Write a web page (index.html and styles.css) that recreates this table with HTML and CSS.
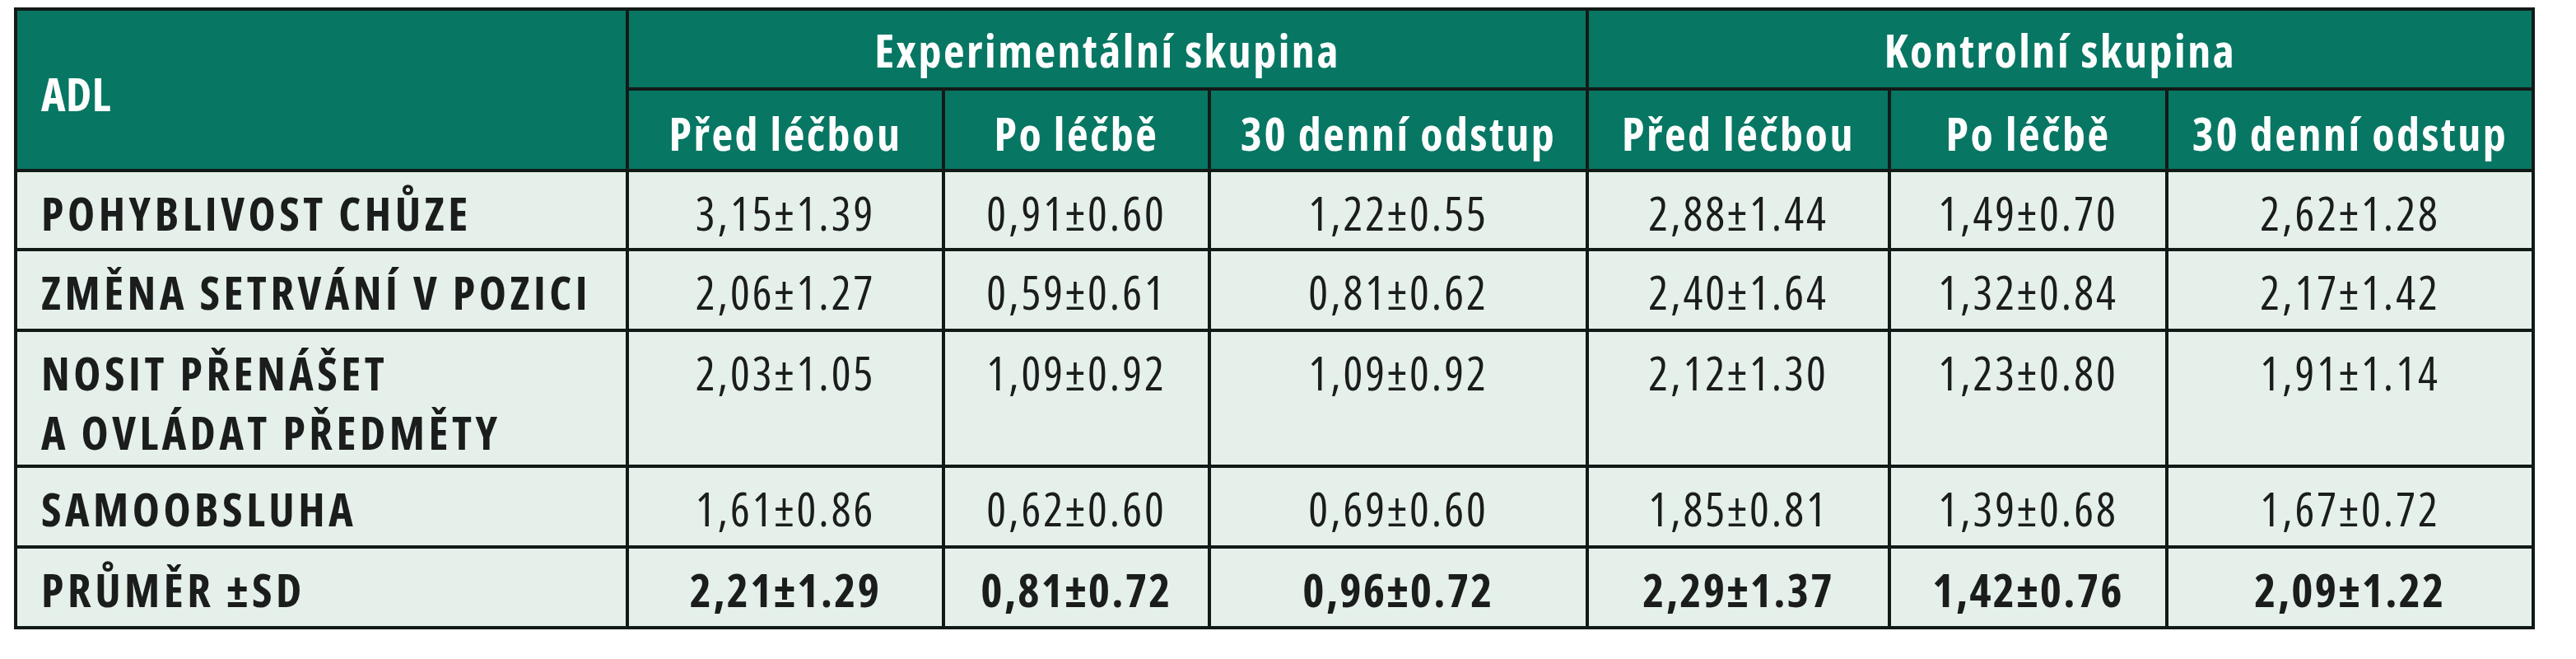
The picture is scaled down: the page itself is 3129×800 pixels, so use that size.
FILE: index.html
```html
<!DOCTYPE html>
<html lang="cs">
<head>
<meta charset="utf-8">
<title>ADL</title>
<link rel="stylesheet" href="styles.css">
</head>
<body>
<table class="adl-table">
  <colgroup>
    <col class="c-label">
    <col class="c-pre">
    <col class="c-post">
    <col class="c-30">
    <col class="c-kpre">
    <col class="c-kpost">
    <col class="c-k30">
  </colgroup>
  <thead>
    <tr class="h-group">
      <th rowspan="2" class="h-adl">ADL</th>
      <th colspan="3">Experimentální skupina</th>
      <th colspan="3">Kontrolní skupina</th>
    </tr>
    <tr class="h-sub">
      <th>Před léčbou</th>
      <th>Po léčbě</th>
      <th>30 denní odstup</th>
      <th>Před léčbou</th>
      <th>Po léčbě</th>
      <th>30 denní odstup</th>
    </tr>
  </thead>
  <tbody>
    <tr class="r-single">
      <td class="label">POHYBLIVOST CHŮZE</td>
      <td>3,15±1.39</td><td>0,91±0.60</td><td>1,22±0.55</td>
      <td>2,88±1.44</td><td>1,49±0.70</td><td>2,62±1.28</td>
    </tr>
    <tr class="r-single r-tall">
      <td class="label">ZMĚNA SETRVÁNÍ V POZICI</td>
      <td>2,06±1.27</td><td>0,59±0.61</td><td>0,81±0.62</td>
      <td>2,40±1.64</td><td>1,32±0.84</td><td>2,17±1.42</td>
    </tr>
    <tr class="r-double">
      <td class="label">NOSIT PŘENÁŠET<br>A OVLÁDAT PŘEDMĚTY</td>
      <td>2,03±1.05</td><td>1,09±0.92</td><td>1,09±0.92</td>
      <td>2,12±1.30</td><td>1,23±0.80</td><td>1,91±1.14</td>
    </tr>
    <tr class="r-single r-tall">
      <td class="label">SAMOOBSLUHA</td>
      <td>1,61±0.86</td><td>0,62±0.60</td><td>0,69±0.60</td>
      <td>1,85±0.81</td><td>1,39±0.68</td><td>1,67±0.72</td>
    </tr>
    <tr class="r-single r-tall r-total">
      <td class="label">PRŮMĚR ±SD</td>
      <td>2,21±1.29</td><td>0,81±0.72</td><td>0,96±0.72</td>
      <td>2,29±1.37</td><td>1,42±0.76</td><td>2,09±1.22</td>
    </tr>
  </tbody>
</table>
</body>
</html>
```

FILE: styles.css
```css
html, body {
  margin: 0;
  padding: 0;
  background: #ffffff;
}

body {
  padding: 9px 0 0 17px;
  font-family: "Open Sans", "Liberation Sans", sans-serif;
  font-stretch: 75%;
}

.adl-table {
  border-collapse: collapse;
  table-layout: fixed;
  width: 3058px;
  border: 4px solid #121a17;
}

.c-label { width: 743px; }
.c-pre { width: 384px; }
.c-post { width: 323px; }
.c-30 { width: 459px; }
.c-kpre { width: 367px; }
.c-kpost { width: 337px; }
.c-k30 { width: 445px; }

.adl-table th,
.adl-table td {
  border: 4px solid #121a17;
  padding: 0;
  white-space: nowrap;
}

.adl-table th {
  background: #077763;
  color: #ffffff;
  font-weight: bold;
  font-size: 56px;
  letter-spacing: 2.5px;
  text-align: center;
  vertical-align: middle;
  line-height: 72px;
}

.h-group { height: 97px; }
.h-sub { height: 99px; }

.h-sub th { padding-top: 6px; }

.adl-table th.h-adl {
  text-align: left;
  padding-left: 29px;
  padding-top: 8px;
  letter-spacing: 0.5px;
}

.adl-table td {
  background: #e5f0eb;
  color: #1b1d1c;
  font-size: 56px;
  letter-spacing: 3px;
  line-height: 72px;
  text-align: center;
  vertical-align: top;
  padding-top: 13px;
}

.adl-table td.label {
  text-align: left;
  padding-left: 29px;
  font-weight: bold;
  letter-spacing: 4.5px;
}

.r-single { height: 96px; }
.r-tall { height: 98px; }
.r-double { height: 165px; }

.r-total td {
  font-weight: bold;
  letter-spacing: 2.2px;
}
```
